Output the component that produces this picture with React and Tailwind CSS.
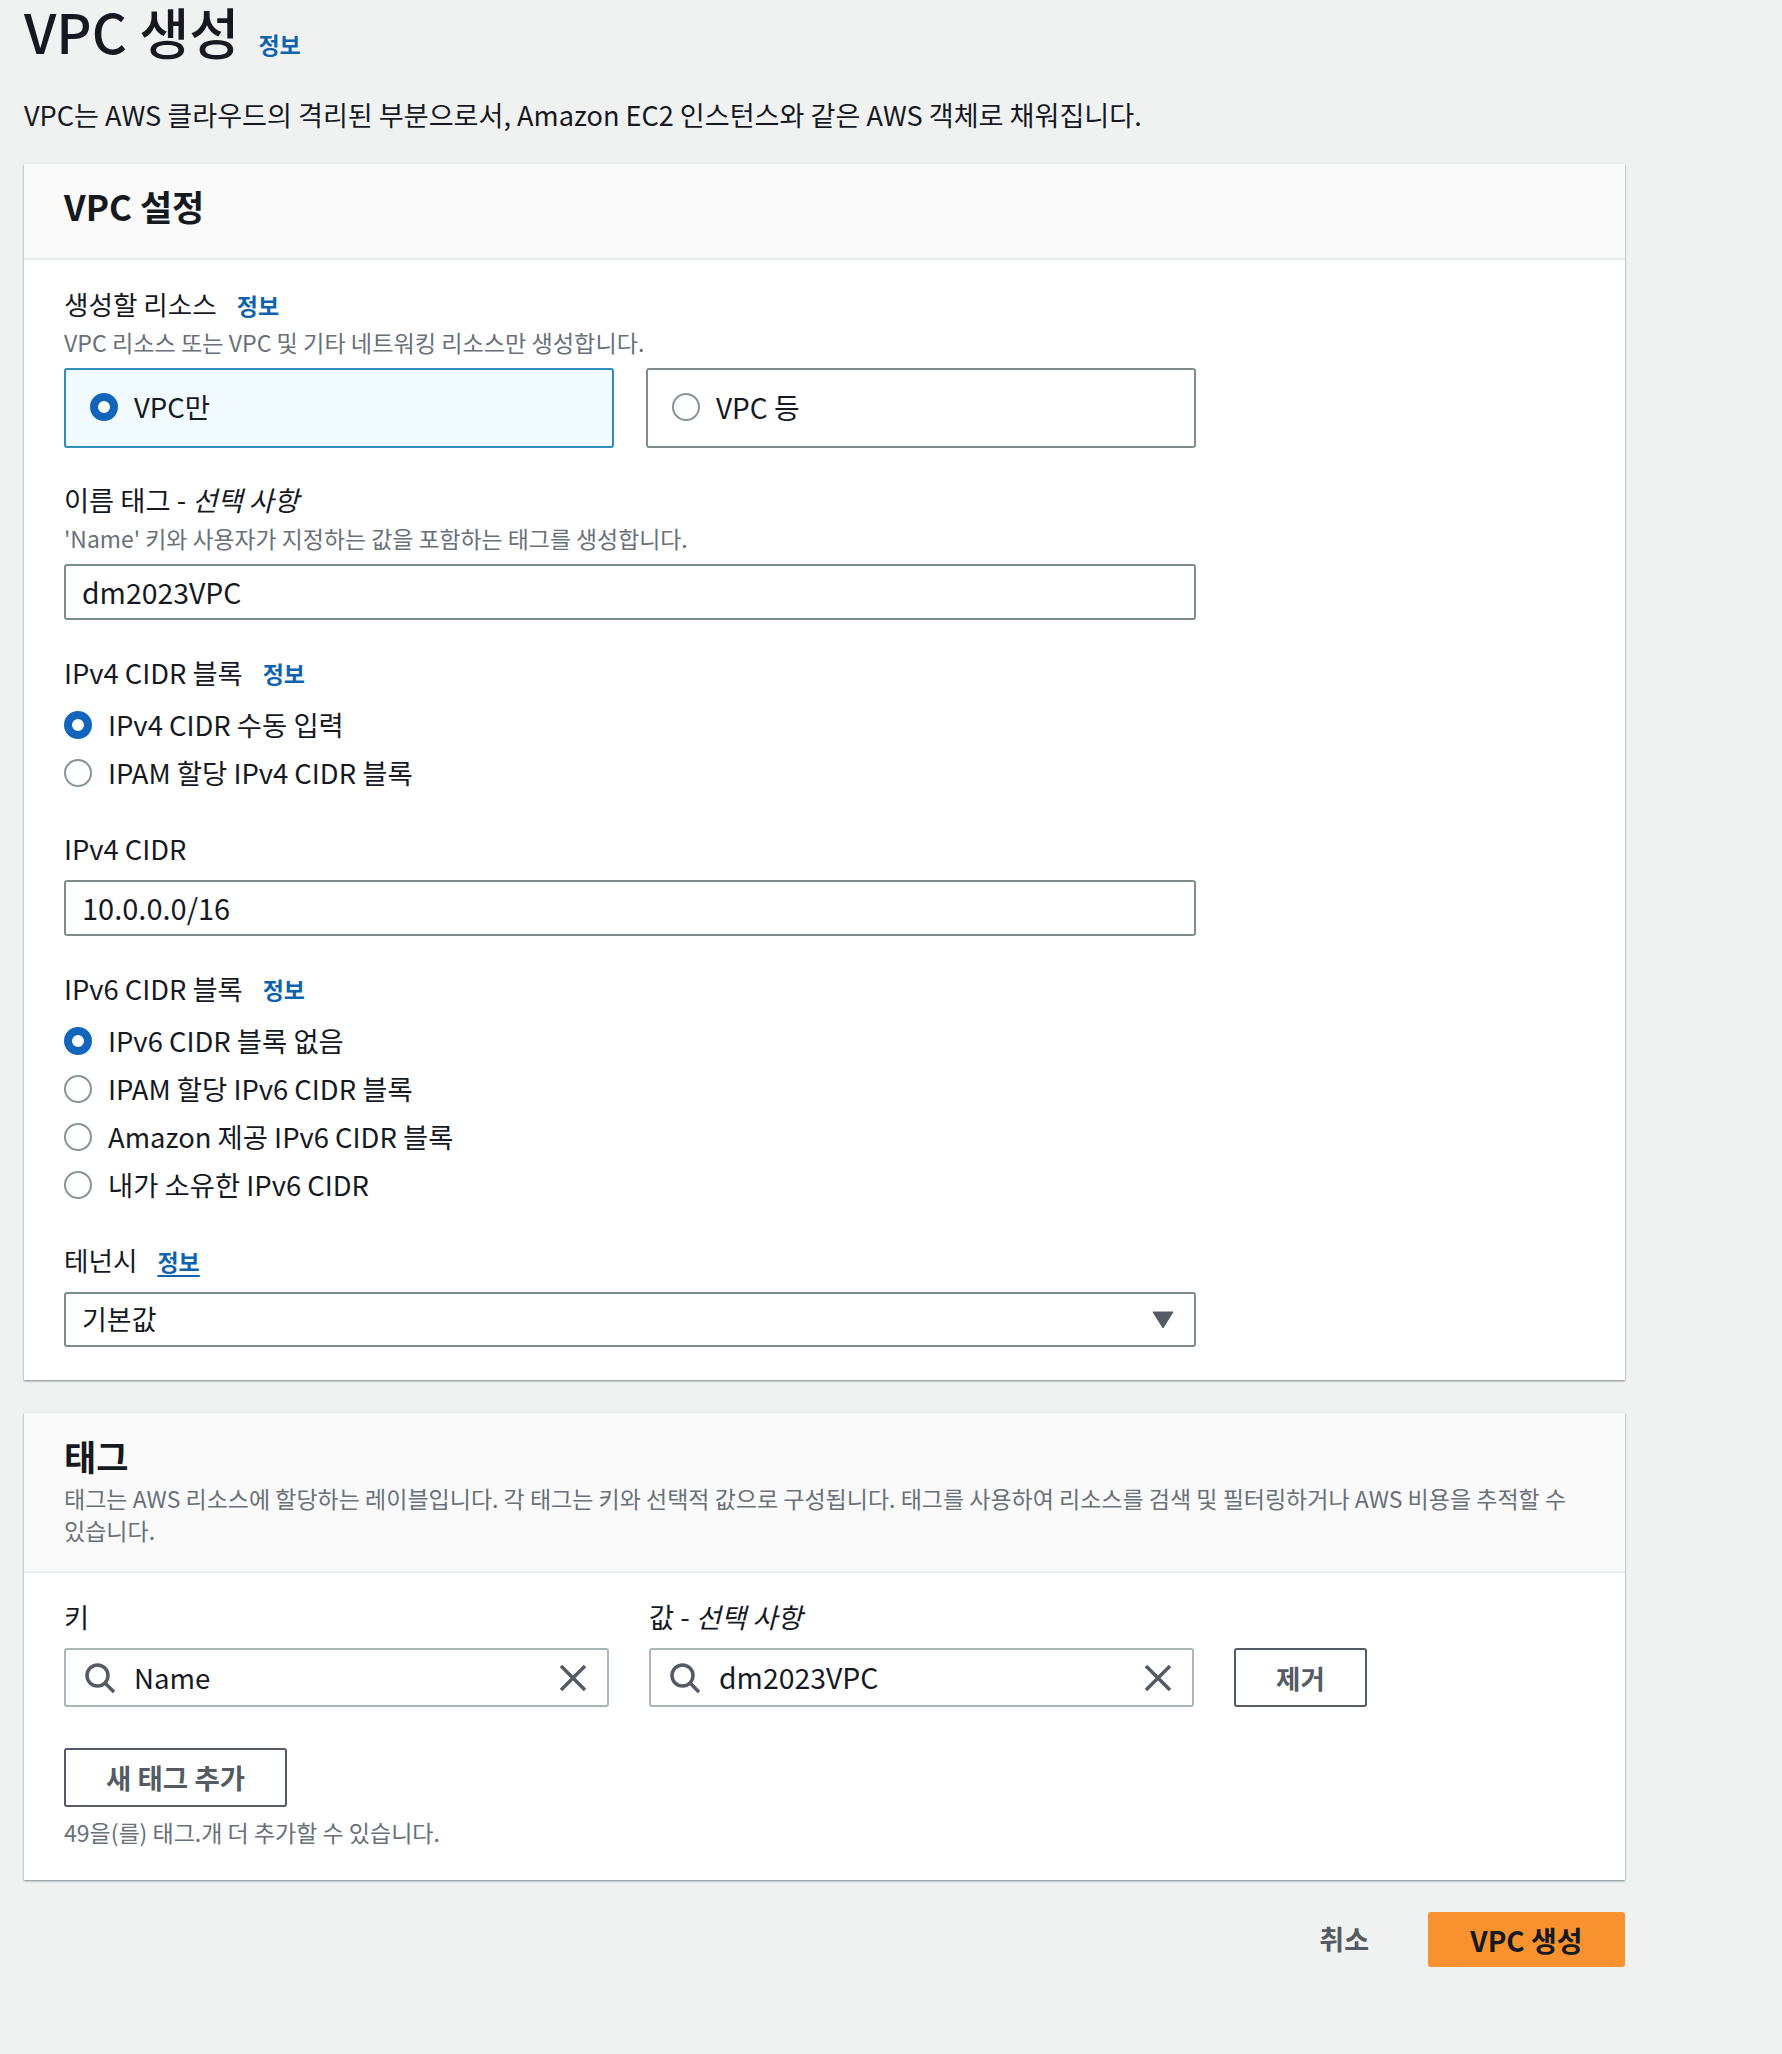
import React from 'react';

const FONT = 'font-["Noto_Sans_CJK_KR","Noto_Sans",sans-serif]';

const Info = ({ underline }) => (
  <span className={`text-[23px] font-bold text-[#0f62ad] leading-none ${underline ? 'underline underline-offset-4' : ''}`}>정보</span>
);

const Label = ({ children, info, underline, size = 'text-[27.3px]' }) => (
  <div className={`flex items-center h-[32px] leading-[32px] text-[#16191f] ${size}`}>
    <span>{children}</span>
    {info && <span className="ml-5 mt-[2px] flex"><Info underline={underline} /></span>}
  </div>
);

const Radio = ({ checked }) =>
  checked ? (
    <span className="w-[28px] h-[28px] rounded-full border-[8px] border-[#1166bb] bg-white shrink-0"></span>
  ) : (
    <span className="w-[28px] h-[28px] rounded-full border-2 border-[#879596] bg-white shrink-0"></span>
  );

const RadioRow = ({ checked, children }) => (
  <div className="flex items-center h-[48px] gap-[16px] text-[27.4px] text-[#16191f]">
    <Radio checked={checked} />
    <span>{children}</span>
  </div>
);

const TextInput = ({ children, className = '' }) => (
  <div className={`w-[1132px] flex items-center px-[16px] bg-white border-2 border-[#7f8c8d] rounded-[3px] text-[#16191f] ${className}`}>
    {children}
  </div>
);

const SearchIcon = () => (
  <svg width="32" height="32" viewBox="0 0 32 32" fill="none" stroke="#545b64" strokeWidth="3.5" className="shrink-0">
    <circle cx="13.5" cy="13.5" r="10.5" />
    <path d="M21 21l9 9" />
  </svg>
);

const CloseIcon = () => (
  <svg width="30" height="30" viewBox="0 0 30 30" fill="none" stroke="#545b64" strokeWidth="3.5" className="shrink-0">
    <path d="M3 3l24 24M27 3L3 27" />
  </svg>
);

const Autosuggest = ({ value, size }) => (
  <div className={`w-[545px] h-[59px] flex items-center pl-[18px] pr-[19px] bg-white border-2 border-[#aab7b8] rounded-[3px] text-[#16191f] ${size}`}>
    <SearchIcon />
    <span className="ml-[18px] flex-1">{value}</span>
    <CloseIcon />
  </div>
);

const App = () => {
  return (
    <div className={`w-full min-h-[2054px] bg-[#f0f2f2] pl-[24px] ${FONT}`}>
      <div className="w-[1601px]">
        {/* 페이지 제목 */}
        <div className="flex items-end h-[62px]">
          <h1 className="text-[54.5px] leading-[62px] font-medium text-[#16191f]">VPC 생성</h1>
          <span className="ml-[19px] mb-[6px] flex"><Info /></span>
        </div>
        <p className="mt-[33px] text-[27.1px] leading-[40px] text-[#16191f]">
          VPC는 AWS 클라우드의 격리된 부분으로서, Amazon EC2 인스턴스와 같은 AWS 객체로 채워집니다.
        </p>

        {/* VPC 설정 */}
        <section className="mt-[29px] bg-white shadow-[0_1px_2px_rgba(0,28,36,0.5)]">
          <div className="h-[96px] flex items-center px-[40px] pb-[10px] bg-[#fafafa] border-b-2 border-[#eaeded]">
            <h2 className="text-[35px] font-bold text-[#16191f]">VPC 설정</h2>
          </div>
          <div className="pt-[28px] pb-[33px] px-[40px]">
            <Label info size="text-[26.6px]">생성할 리소스</Label>
            <p className="mt-[6px] text-[23.15px] leading-[32px] text-[#687078]">VPC 리소스 또는 VPC 및 기타 네트워킹 리소스만 생성합니다.</p>
            <div className="mt-[10px] flex gap-[32px]">
              <div className="w-[550px] h-[80px] flex items-center gap-[16px] pl-[24px] pb-[2px] bg-[#f1faff] border-2 border-[#2e8dbd] rounded-[3px] text-[27.5px] text-[#16191f]">
                <Radio checked />
                <span>VPC만</span>
              </div>
              <div className="w-[550px] h-[80px] flex items-center gap-[16px] pl-[24px] pb-[2px] bg-white border-2 border-[#7f8c8d] rounded-[3px] text-[28px] text-[#16191f]">
                <Radio />
                <span>VPC 등</span>
              </div>
            </div>

            <div className="mt-[35px]"><Label>이름 태그 - <em>선택 사항</em></Label></div>
            <p className="mt-[7px] text-[22.9px] leading-[32px] text-[#687078]">'Name' 키와 사용자가 지정하는 값을 포함하는 태그를 생성합니다.</p>
            <TextInput className="mt-[10px] h-[56px] text-[28.4px]">dm2023VPC</TextInput>

            <div className="mt-[36px]"><Label info>IPv4 CIDR 블록</Label></div>
            <div className="mt-[13px]">
              <RadioRow checked>IPv4 CIDR 수동 입력</RadioRow>
              <RadioRow>IPAM 할당 IPv4 CIDR 블록</RadioRow>
            </div>

            <div className="mt-[35px]"><Label>IPv4 CIDR</Label></div>
            <TextInput className="mt-[16px] h-[56px] text-[29px]">10.0.0.0/16</TextInput>

            <div className="mt-[36px]"><Label info>IPv6 CIDR 블록</Label></div>
            <div className="mt-[13px]">
              <RadioRow checked>IPv6 CIDR 블록 없음</RadioRow>
              <RadioRow>IPAM 할당 IPv6 CIDR 블록</RadioRow>
              <RadioRow>Amazon 제공 IPv6 CIDR 블록</RadioRow>
              <RadioRow>내가 소유한 IPv6 CIDR</RadioRow>
            </div>

            <div className="mt-[35px]"><Label info underline size="text-[26.6px]">테넌시</Label></div>
            <TextInput className="mt-[16px] h-[55px] justify-between text-[27px]">
              <span>기본값</span>
              <svg width="22" height="18" viewBox="0 0 22 18" className="mr-[4px]">
                <path d="M1 1h20L11 17z" fill="#545b64" stroke="#545b64" strokeLinejoin="round" />
              </svg>
            </TextInput>
          </div>
        </section>

        {/* 태그 */}
        <section className="mt-[33px] bg-white shadow-[0_1px_2px_rgba(0,28,36,0.5)]">
          <div className="h-[160px] px-[40px] pt-[23px] bg-[#fafafa] border-b-2 border-[#eaeded]">
            <h2 className="text-[35px] leading-[40px] font-bold text-[#16191f]">태그</h2>
            <p className="mt-[6px] text-[23px] leading-[32px] text-[#687078]">
              태그는 AWS 리소스에 할당하는 레이블입니다. 각 태그는 키와 선택적 값으로 구성됩니다. 태그를 사용하여 리소스를 검색 및 필터링하거나 AWS 비용을 추적할 수 있습니다.
            </p>
          </div>
          <div className="pt-[27px] pb-[32px] px-[40px]">
            <div className="flex gap-[40px]">
              <div>
                <Label>키</Label>
                <div className="mt-[16px]"><Autosuggest value="Name" size="text-[27.6px]" /></div>
              </div>
              <div>
                <Label>값 - <em>선택 사항</em></Label>
                <div className="mt-[16px]"><Autosuggest value="dm2023VPC" size="text-[28.4px]" /></div>
              </div>
              <div className="pt-[48px]">
                <button className="w-[133px] h-[59px] bg-white border-2 border-[#545b64] rounded-[3px] text-[26.5px] font-bold text-[#545b64]">제거</button>
              </div>
            </div>
            <button className="mt-[41px] w-[223px] h-[59px] bg-white border-2 border-[#545b64] rounded-[3px] text-[27.5px] font-bold text-[#545b64]">새 태그 추가</button>
            <p className="mt-[9px] text-[23px] leading-[32px] text-[#687078]">49을(를) 태그.개 더 추가할 수 있습니다.</p>
          </div>
        </section>

        {/* 하단 버튼 */}
        <div className="mt-[32px] flex items-center justify-end">
          <button className="text-[27px] font-bold text-[#545b64]">취소</button>
          <button className="ml-[59px] w-[197px] h-[55px] bg-[#f7922f] rounded-[3px] text-[28px] font-bold text-[#16191f]">VPC 생성</button>
        </div>
      </div>
    </div>
  );
};

export default App;
